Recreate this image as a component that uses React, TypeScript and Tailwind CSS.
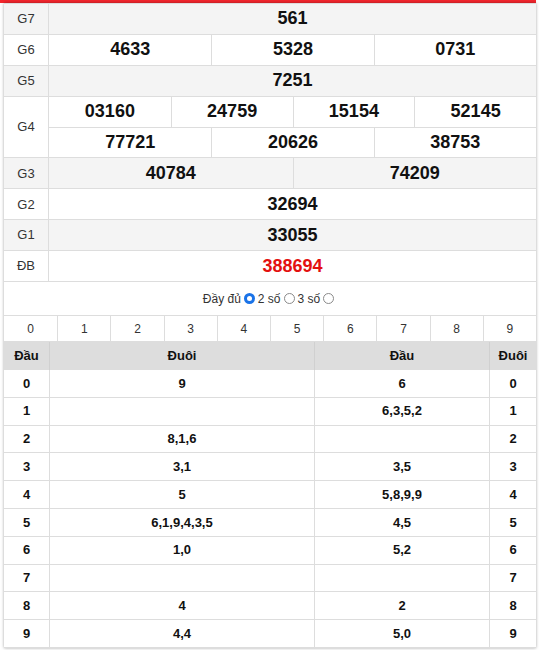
import { Fragment } from 'react'

const prizes: { label: string; rows: string[][]; red?: boolean }[] = [
  { label: 'G7', rows: [['561']] },
  { label: 'G6', rows: [['4633', '5328', '0731']] },
  { label: 'G5', rows: [['7251']] },
  { label: 'G4', rows: [['03160', '24759', '15154', '52145'], ['77721', '20626', '38753']] },
  { label: 'G3', rows: [['40784', '74209']] },
  { label: 'G2', rows: [['32694']] },
  { label: 'G1', rows: [['33055']] },
  { label: 'ĐB', rows: [['388694']], red: true },
]

const loto: [string, string, string, string][] = [
  ['0', '9', '6', '0'],
  ['1', '', '6,3,5,2', '1'],
  ['2', '8,1,6', '', '2'],
  ['3', '3,1', '3,5', '3'],
  ['4', '5', '5,8,9,9', '4'],
  ['5', '6,1,9,4,3,5', '4,5', '5'],
  ['6', '1,0', '5,2', '6'],
  ['7', '', '', '7'],
  ['8', '4', '2', '8'],
  ['9', '4,4', '5,0', '9'],
]

const cols: Record<number, string> = {
  1: 'grid-cols-1',
  2: 'grid-cols-2',
  3: 'grid-cols-3',
  4: 'grid-cols-4',
}

function Radio({ checked }: { checked?: boolean }) {
  if (checked) {
    return (
      <span className="inline-flex items-center justify-center w-[11px] h-[11px] rounded-full bg-[#1a73e8] mx-[3px]">
        <span className="w-[5px] h-[5px] rounded-full bg-white" />
      </span>
    )
  }
  return <span className="inline-block w-[11px] h-[11px] rounded-full border border-[#8a8a8a] bg-white mx-[3px]" />
}

export default function App() {
  return (
    <div className="w-[539px] h-[650px] bg-white font-['Liberation_Sans',Arial,sans-serif] text-[#333]">
      <div className="w-[536px] h-[3px] bg-[#f3262d]" />
      <div className="w-[532px] ml-[4px] shadow-[0_0_3px_rgba(0,0,0,0.35)] border-t border-[#ddd]">
        {prizes.map((p, i) => (
          <div
            key={p.label}
            className={
              'grid grid-cols-[45px_1fr] border-b border-[#ddd] ' +
              (p.rows.length > 1 ? 'h-[61.8px] ' : 'h-[30.9px] ') +
              (i % 2 === 0 ? 'bg-[#f4f4f4]' : 'bg-white')
            }
          >
            <div className="flex items-center justify-center text-[13px] border-r border-[#ddd]">{p.label}</div>
            <div className="flex flex-col">
              {p.rows.map((r, j) => (
                <div
                  key={j}
                  className={'grid flex-1 ' + cols[r.length] + (j > 0 ? ' border-t border-[#ddd]' : '')}
                >
                  {r.map((n, k) => (
                    <div
                      key={k}
                      className={
                        'flex items-center justify-center text-[18px] font-bold ' +
                        (p.red ? 'text-[#e3100f]' : 'text-[#111]') +
                        (k > 0 ? ' border-l border-[#ddd]' : '')
                      }
                    >
                      {n}
                    </div>
                  ))}
                </div>
              ))}
            </div>
          </div>
        ))}

        <div className="h-[34px] flex items-center justify-center text-[12px] text-[#333] border-b border-[#ddd]">
          <span>Đầy đủ</span>
          <Radio checked />
          <span>2 số</span>
          <Radio />
          <span>3 số</span>
          <Radio />
        </div>

        <div className="grid grid-cols-10 h-[26px] border-b border-[#ddd]">
          {Array.from({ length: 10 }, (_, i) => (
            <div key={i} className={'flex items-center justify-center text-[12px]' + (i > 0 ? ' border-l border-[#ddd]' : '')}>
              {i}
            </div>
          ))}
        </div>

        <div className="grid grid-cols-[45px_265px_175px_1fr] text-[13px] font-bold text-[#111]">
          {['Đầu', 'Đuôi', 'Đầu', 'Đuôi'].map((h, i) => (
            <div
              key={i}
              className={'h-[28px] flex items-center justify-center bg-[#dddddd]' + (i > 0 ? ' border-l border-[#d0d0d0]' : '')}
            >
              {h}
            </div>
          ))}
          {loto.map((r, i) => (
            <Fragment key={i}>
              {r.map((c, k) => (
                <div
                  key={k}
                  className={'h-[27.8px] flex items-center justify-center border-b border-[#ddd]' + (k > 0 ? ' border-l' : '')}
                >
                  {c}
                </div>
              ))}
            </Fragment>
          ))}
        </div>
      </div>
    </div>
  )
}
